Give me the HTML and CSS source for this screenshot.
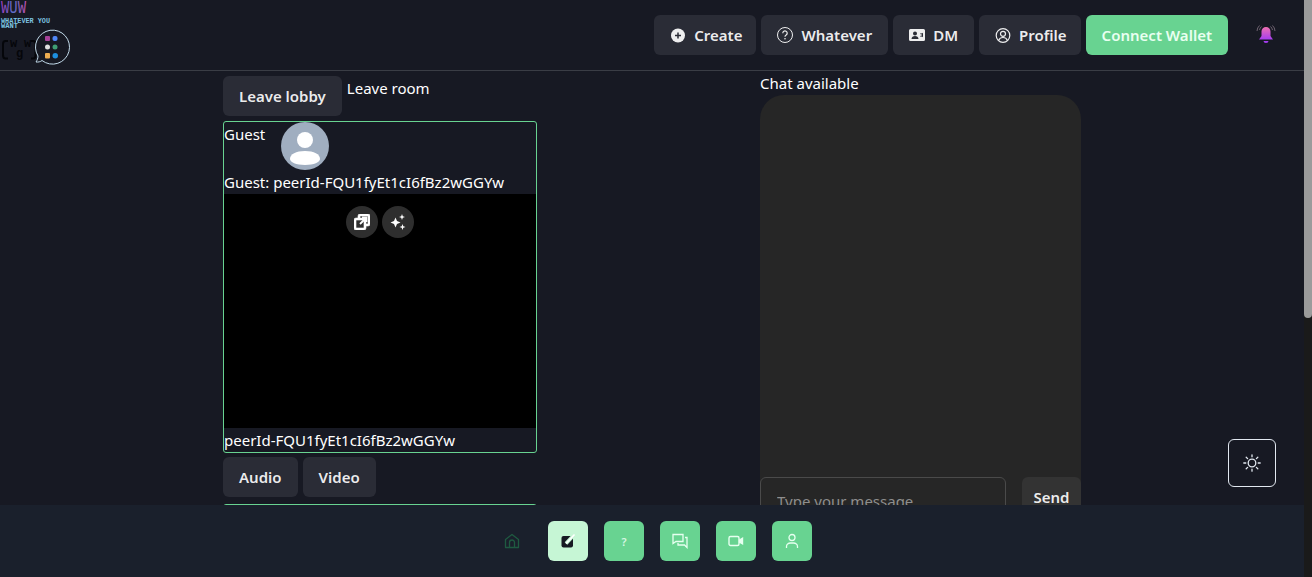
FILE: index.html
```html
<!DOCTYPE html>
<html lang="en">
<head>
<meta charset="utf-8">
<title>Whatever You Want</title>
<link rel="stylesheet" href="styles.css">
</head>
<body>
<header class="topbar">
  <svg class="logo" width="72" height="66" viewBox="0 0 72 66">
    <defs><linearGradient id="wuwfill" x1="0" y1="0" x2="1" y2="0"><stop offset="0" stop-color="#a040c0"/><stop offset=".5" stop-color="#5a70c8"/><stop offset="1" stop-color="#c050b0"/></linearGradient></defs>
    <text class="logo-wuw" x="1" y="13" textLength="25" lengthAdjust="spacingAndGlyphs" fill="url(#wuwfill)">WUW</text>
    <text class="logo-name" x="1" y="23" textLength="49" lengthAdjust="spacingAndGlyphs">WHATEVER YOU</text>
    <text class="logo-name" x="1" y="28" textLength="17" lengthAdjust="spacingAndGlyphs">WANT</text>
    <path d="M8 41H5.500C4 41 3 42 3 44v11c0 2 1 3.500 2.500 3.500H8" fill="none" stroke="#05060a" stroke-width="2"/>
    <path d="M31 41h2c1.500 0 2.500 1 2.500 3v11c0 2-1 3.500-2.500 3.500h-2" fill="none" stroke="#05060a" stroke-width="2"/>
    <text class="logo-cat" x="10" y="47">w</text>
    <text class="logo-cat" x="24" y="47">w</text>
    <text class="logo-cat" x="16" y="57">g</text>
    <path d="M36 62c2 .3 4.500-.2 6-1.500a17 17 0 1 0-4-4.500c0 2.500-1 4.500-2 6z" fill="#171923" stroke="#c3dcec" stroke-width="1"/>
    <rect x="45" y="36" width="5" height="5" rx="1" fill="#a8429a"/>
    <rect x="52.500" y="36" width="5" height="5" rx="2" fill="#4f86f5"/>
    <rect x="45" y="44.500" width="5" height="5" rx="2.500" fill="#e0e0e0"/>
    <rect x="52.500" y="44.500" width="5" height="5" rx="2.500" fill="#3f9f74"/>
    <rect x="45" y="53" width="5" height="5.500" rx="1" fill="#eead50"/>
    <rect x="52.500" y="53" width="5.500" height="5.500" rx="2.700" fill="#1d8fe0"/>
  </svg>
  <nav class="topnav">
    <button class="btn btn-tight"><svg class="ic" width="16" height="16" viewBox="0 0 16 16"><circle cx="8" cy="8.500" r="7" fill="currentColor"/><path d="M8 5.500v6M5 8.500h6" stroke="#2a2c36" stroke-width="1.500"/></svg>Create</button>
    <button class="btn"><svg class="ic" width="16" height="16" viewBox="0 0 16 16" fill="none" stroke="currentColor"><circle cx="8" cy="8" r="7.500"/><path d="M5.800 6.200a2.200 2.200 0 1 1 3.400 1.800c-.8.500-1.200 1-1.200 1.800" stroke-width="1.200"/><circle cx="8" cy="11.800" r=".8" fill="currentColor" stroke="none"/></svg>Whatever</button>
    <button class="btn"><svg class="ic" width="16" height="14" viewBox="0 0 16 14"><path fill="currentColor" fill-rule="evenodd" d="M1.500 1h13A1.500 1.500 0 0 1 16 2.500v9a1.500 1.500 0 0 1-1.500 1.500h-13A1.500 1.500 0 0 1 0 11.500v-9A1.500 1.500 0 0 1 1.500 1zM6 3.500a2 2 0 1 0 0 4 2 2 0 0 0 0-4zM2.500 11h7c0-2-1.500-3-3.500-3s-3.500 1-3.500 3zM11.500 5v1.500l2.500-1.800v4.600l-2.500-1.800V9h1V5z"/></svg>DM</button>
    <button class="btn btn-tight"><svg class="ic" width="16" height="16" viewBox="0 0 16 16" fill="none" stroke="currentColor" stroke-width="1.200"><circle cx="8" cy="8.500" r="6.800"/><circle cx="8" cy="6.800" r="2.500"/><path d="M3.700 13.300c.8-2 2.300-2.800 4.300-2.800s3.500.8 4.300 2.800"/></svg>Profile</button>
    <button class="btn btn-green">Connect Wallet</button>
    <svg class="bell" width="20" height="22" viewBox="0 0 20 22">
      <defs><linearGradient id="bellfill" x1="0" y1="0" x2="0" y2="1"><stop offset="0" stop-color="#ee6fb0"/><stop offset="1" stop-color="#a63df0"/></linearGradient></defs>
      <path d="M10 4a4.500 4.500 0 0 0-4.500 4.500V13L3 16.500h14L14.500 13V8.500A4.500 4.500 0 0 0 10 4z" fill="url(#bellfill)"/>
      <path d="M7.500 18h5a2.500 2 0 0 1-5 0z" fill="#a63df0"/>
      <path d="M3.500 2.500A8 8 0 0 0 1 8M5.500 3.500A6 6 0 0 0 3.500 7M16.500 2.500A8 8 0 0 1 19 8M14.500 3.500A6 6 0 0 1 16.500 7" stroke="#6e6270" fill="none"/>
    </svg>
  </nav>
</header>

<main class="room">
  <section class="peers">
    <div class="leave-row">
      <button class="btn">Leave lobby</button>
      <span class="leave-text">Leave room</span>
    </div>
    <article class="card">
      <div class="card-head">
        <span class="guest">Guest</span>
        <svg class="avatar" width="48" height="48" viewBox="0 0 48 48"><circle cx="24" cy="24" r="24" fill="#a0aec0"/><circle cx="24" cy="18" r="8" fill="#fff"/><path d="M9 37c0-5 6-8 15-8s15 3 15 8c0 3-6 6-15 6s-15-3-15-6z" fill="#fff"/></svg>
      </div>
      <div class="line">Guest: peerId-FQU1fyEt1cI6fBz2wGGYw</div>
      <div class="video">
        <span class="round"><svg width="16" height="16" viewBox="0 0 16 16"><path fill="#fff" stroke="#fff" stroke-width=".6" fill-rule="evenodd" d="M6 0h8a2 2 0 0 1 2 2v8a2 2 0 0 1-2 2h-2v2a2 2 0 0 1-2 2H2a2 2 0 0 1-2-2V6a2 2 0 0 1 2-2h2V2a2 2 0 0 1 2-2zm0 2v2h4a2 2 0 0 1 2 2v4h2V2zM2 6v8h8V6z"/><path d="M6 10 11.500 4.500M8 3.500h4.500V8" stroke="#fff" stroke-width="1.800" fill="none"/></svg></span>
        <span class="round"><svg width="18" height="18" viewBox="0 0 18 18" fill="#fff"><path d="M6.500 4.500 8 8l3.500 1.500L8 11l-1.500 3.500L5 11 1.500 9.500 5 8z"/><path d="M13 1l.8 2.200L16 4l-2.200.8L13 7l-.8-2.200L10 4l2.200-.8zM13.500 11l.8 2.200 2.200.8-2.200.8-.8 2.200-.8-2.200-2.200-.8 2.200-.8z"/></svg></span>
      </div>
      <div class="line">peerId-FQU1fyEt1cI6fBz2wGGYw</div>
    </article>
    <div class="controls">
      <button class="btn">Audio</button>
      <button class="btn">Video</button>
    </div>
    <article class="card card-next">
      <div class="video"></div>
    </article>
  </section>
  <aside class="chat">
    <div class="chat-title">Chat available</div>
    <div class="chat-panel">
      <div class="chat-log"></div>
      <form class="chat-form">
        <input class="chat-input" type="text" placeholder="Type your message...">
        <button class="btn btn-send" type="button">Send</button>
      </form>
    </div>
  </aside>
</main>

<div class="scrollbar"><div class="scrollbar-thumb"></div></div>

<button class="theme" aria-label="Toggle theme"><svg width="18" height="18" viewBox="0 0 18 18" fill="none" stroke="#e2e8f0" stroke-width="1.300" stroke-linecap="round"><circle cx="9" cy="9" r="3.800"/><path d="M9 .8v2M9 15.200v2M.8 9h2M15.200 9h2M3.200 3.200l1.400 1.400M13.400 13.400l1.400 1.400M3.200 14.800l1.400-1.400M13.400 4.600l1.400-1.400"/></svg></button>

<nav class="dock">
  <span class="dock-home"><svg width="16" height="16" viewBox="0 0 16 16" fill="none" stroke="#1f5a41" stroke-width="1.300"><path d="M1.500 14.500V6.500L8 1.500l6.500 5v8z" stroke-linejoin="round"/><path d="M5.500 14.500V9.500a2.500 2.500 0 0 1 5 0v5"/></svg></span>
  <button class="dock-btn dock-active"><svg width="16" height="16" viewBox="0 0 16 16"><rect x="1.500" y="3" width="11.500" height="11.500" rx="2" fill="#171923"/><path d="M6 10.500 13.500 2.500" stroke="#c6f6d5" stroke-width="3.500"/><path d="M6 10.500 14.500 1.500" stroke="#fff" stroke-width="1.600"/></svg></button>
  <button class="dock-btn dock-q">?</button>
  <button class="dock-btn"><svg width="16" height="16" viewBox="0 0 16 16" fill="none" stroke="#e6fff0" stroke-width="1.300"><path d="M1 1.500h10v7H4L1 10.500z"/><path d="M13 4.500h2v10l-2.500-2.500H6v-2"/></svg></button>
  <button class="dock-btn"><svg width="16" height="16" viewBox="0 0 16 16" fill="none" stroke="#e6fff0" stroke-width="1.400"><rect x="1" y="3.500" width="10" height="9" rx="1.500"/><path d="M11.500 7l3-1.800v5.600l-3-1.800z" fill="#e6fff0"/></svg></button>
  <button class="dock-btn"><svg width="16" height="16" viewBox="0 0 16 16" fill="none" stroke="#e6fff0" stroke-width="1.300"><circle cx="8" cy="4.500" r="3"/><path d="M2.500 15v-1.500c0-2 1.800-3.500 4-3.500h3c2.200 0 4 1.500 4 3.500V15"/></svg></button>
</nav>
</body>
</html>
```
FILE: styles.css
```css
* { box-sizing: border-box; }
html { background: #171923; scrollbar-width: none; }
body {
  margin: 0;
  width: 1304px;
  min-height: 1047px;
  background: #171923;
  color: #fff;
  font-family: "Noto Sans", "Open Sans", sans-serif;
  font-size: 15px;
  line-height: 24px;
}
button { font-family: inherit; }

.topbar {
  height: 71px;
  display: flex;
  justify-content: space-between;
  align-items: flex-start;
  border-bottom: 1px solid #3a3d45;
}
.logo { flex: none; }
.logo-wuw { font: 400 18px "Liberation Mono", monospace; }
.logo-name { font: 700 6.500px "Liberation Mono", monospace; fill: #7ec4e0; }
.logo-cat { font: 700 12px "Liberation Mono", monospace; fill: #05060a; }

.topnav { display: flex; align-items: center; gap: 5px; height: 70px; padding-right: 28px; }
.btn {
  height: 40px;
  padding: 0 16px;
  display: inline-flex;
  align-items: center;
  gap: 8px;
  border: 0;
  border-radius: 6px;
  background: #2a2c36;
  color: rgba(255, 255, 255, .92);
  font-size: 15px;
  font-weight: 600;
  white-space: nowrap;
}
.btn-tight { padding-right: 14px; }
.btn-green { background: #68d391; color: #e8fff0; }
.ic { flex: none; }
.bell { margin-left: 23px; flex: none; margin-top: -2px; }

.room {
  width: 858px;
  margin: 0 auto;
  display: flex;
  justify-content: space-between;
  align-items: flex-start;
}
.peers { width: 314px; padding-top: 5px; display: flex; flex-direction: column; }
.leave-row { display: flex; align-items: flex-start; gap: 5px; }
.card {
  margin-top: 5px;
  border: 1px solid #68d391;
  border-radius: 3px;
  display: flex;
  flex-direction: column;
}
.card-head { height: 48px; display: flex; align-items: flex-start; }
.guest { width: 57px; }
.avatar { flex: none; }
.line { height: 24px; }
.video {
  height: 234px;
  background: #000;
  display: flex;
  justify-content: center;
  align-items: flex-start;
  gap: 4px;
  padding-top: 12px;
}
.round {
  width: 32px;
  height: 32px;
  border-radius: 50%;
  background: #2e2e2e;
  display: flex;
  align-items: center;
  justify-content: center;
}
.controls { display: flex; gap: 5px; margin-top: 4px; }
.card-next { margin-top: 7px; }

.chat { width: 321px; }
.chat-title { height: 24px; }
.chat-panel {
  height: 440px;
  background: #262626;
  border-radius: 24px;
  display: flex;
  flex-direction: column;
}
.chat-log { height: 382px; flex: none; }
.chat-form { display: flex; align-items: flex-start; gap: 16px; }
.chat-input {
  width: 246px;
  height: 48px;
  padding: 0 16px;
  border: 1px solid #4a4a4a;
  border-radius: 6px;
  background: transparent;
  color: #fff;
  font-family: inherit;
  font-size: 15px;
}
.chat-input::placeholder { color: #8e8e8e; opacity: 1; }
.btn-send { width: 59px; padding: 0; justify-content: center; background: #333; }

.scrollbar {
  position: fixed;
  top: 0;
  right: 0;
  bottom: 0;
  width: 8px;
  background: #1a1a1a;
}
.scrollbar-thumb { height: 318px; background: #9b9b9b; border-radius: 0 0 4px 4px; }
.theme {
  position: fixed;
  left: 1228px;
  top: 439px;
  width: 48px;
  height: 48px;
  border: 1px solid #e2e8f0;
  border-radius: 6px;
  background: #171923;
  display: flex;
  align-items: center;
  justify-content: center;
  padding: 0;
}
.dock {
  position: fixed;
  left: 0;
  right: 8px;
  bottom: 0;
  height: 72px;
  background: #1a202c;
  display: flex;
  justify-content: center;
  align-items: center;
  gap: 16px;
}
.dock-home { width: 40px; height: 40px; display: flex; align-items: center; justify-content: center; }
.dock-btn {
  width: 40px;
  height: 40px;
  padding: 0;
  border: 0;
  border-radius: 6px;
  background: #68d391;
  display: flex;
  align-items: center;
  justify-content: center;
}
.dock-active { background: #c6f6d5; }
.dock-q { color: #d5f7e2; font-size: 11px; font-weight: 600; }
```
